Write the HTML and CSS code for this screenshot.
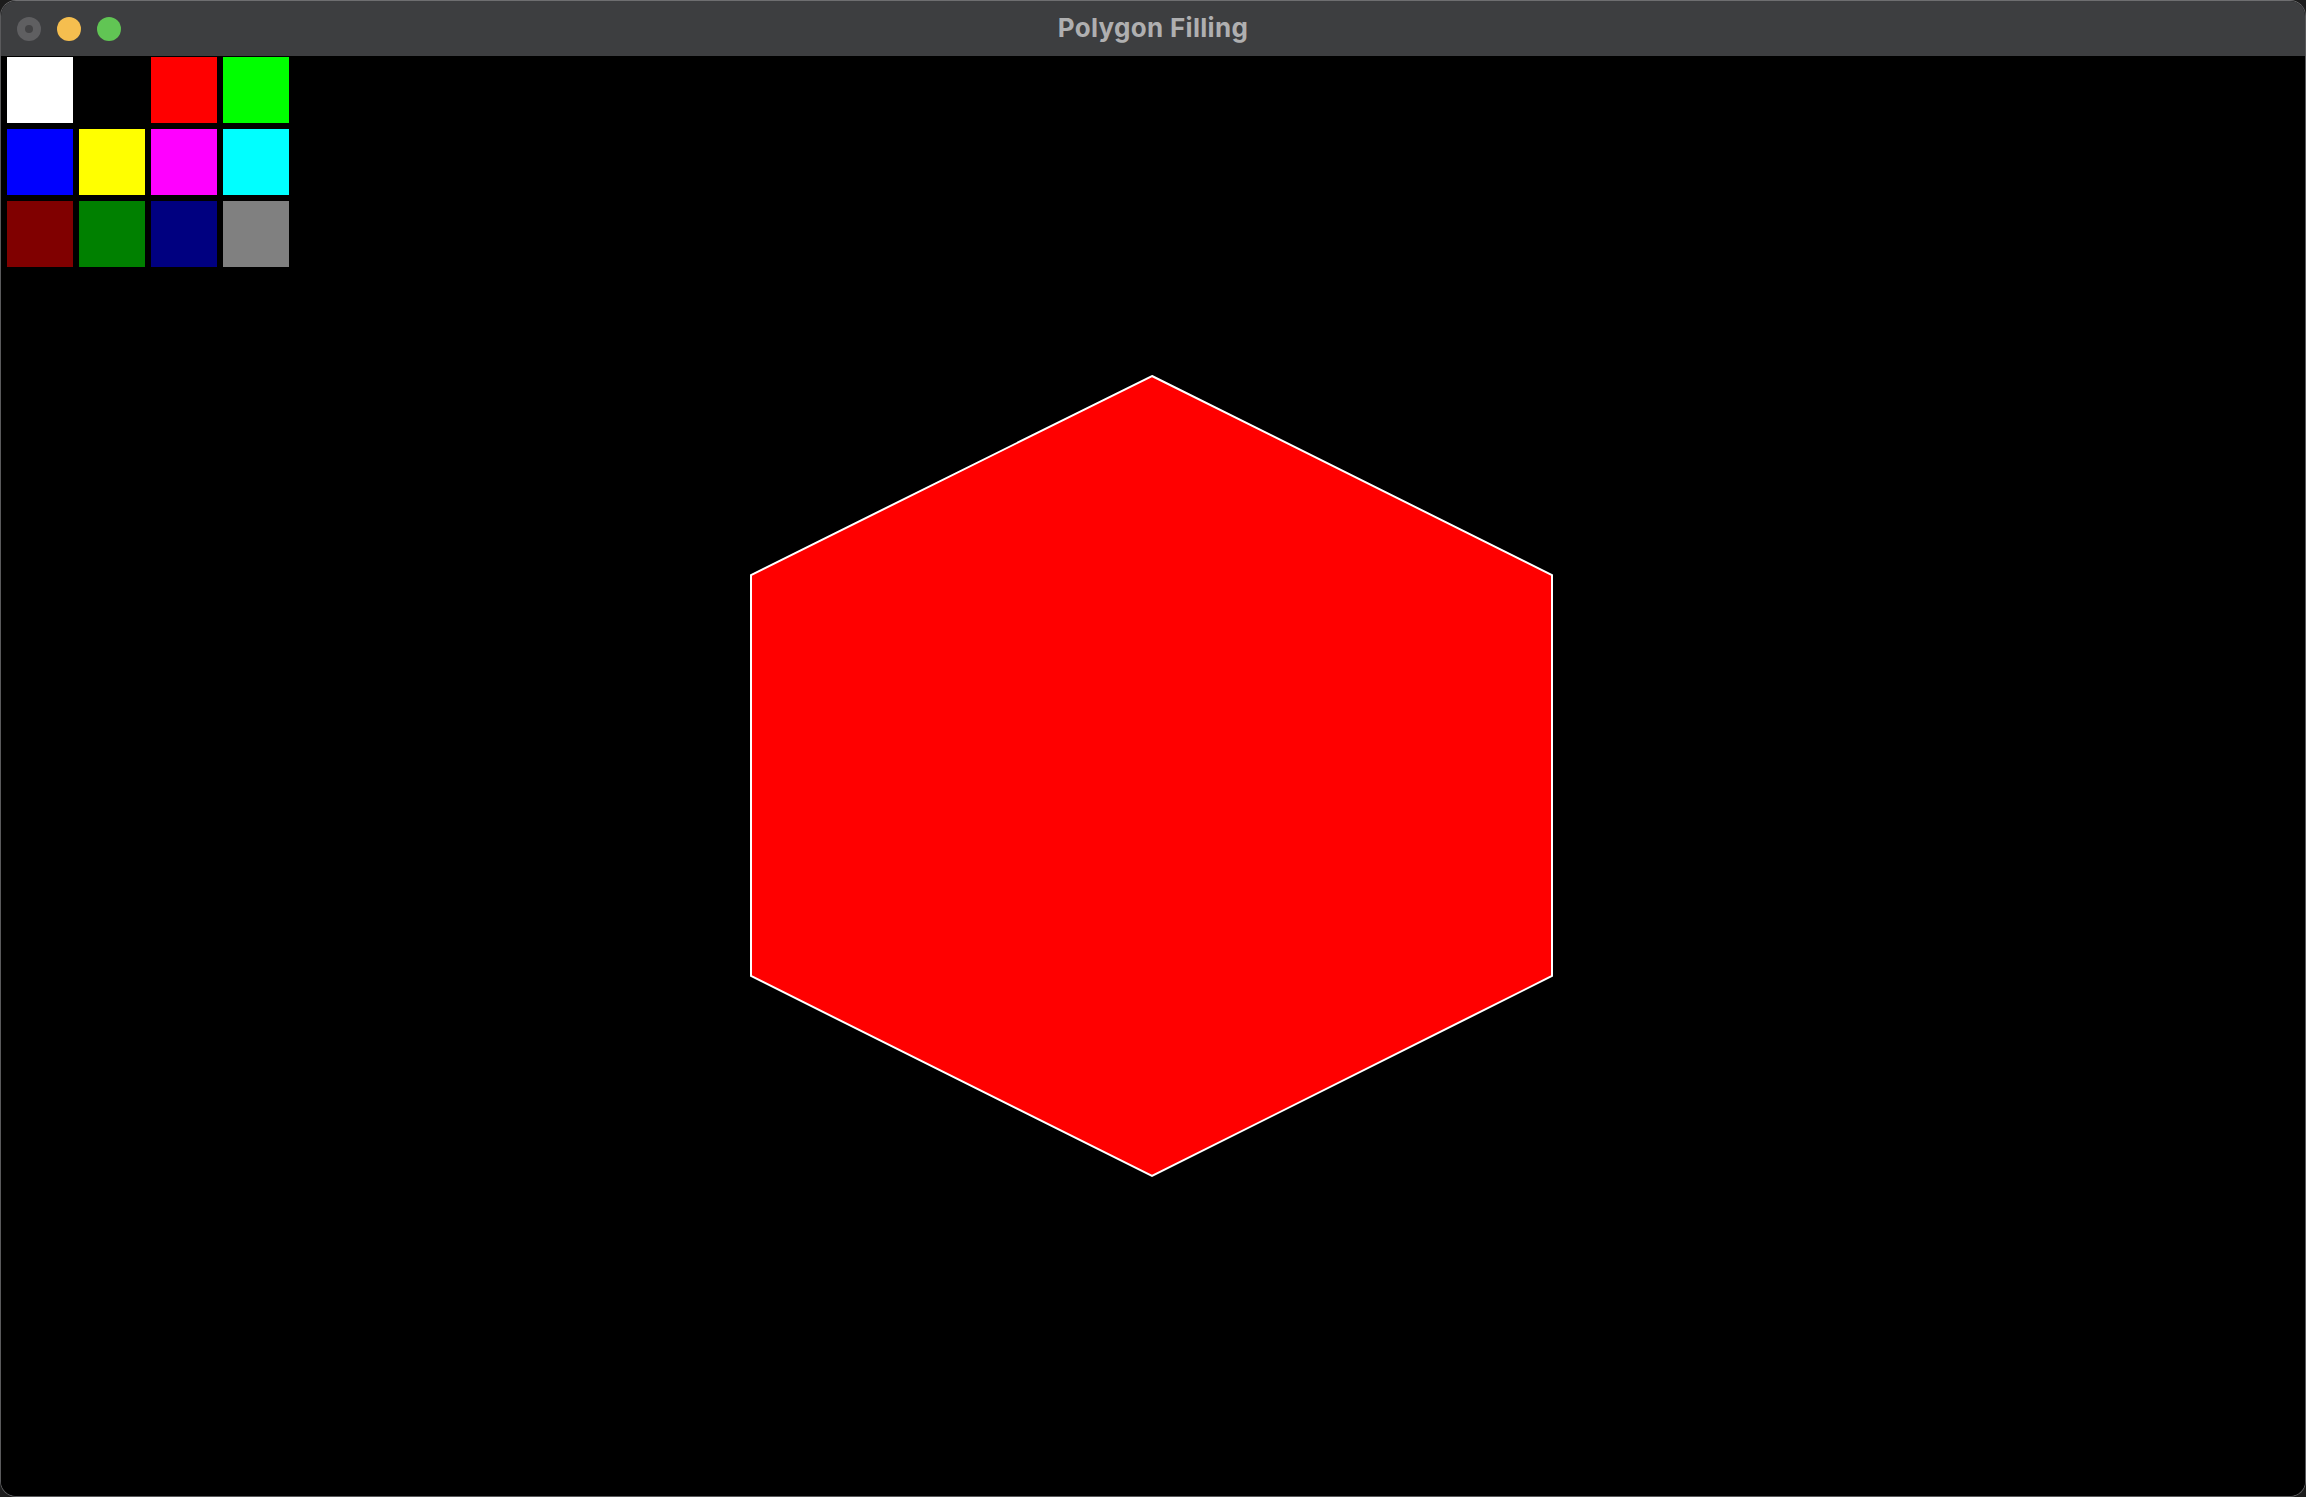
FILE: index.html
```html
<!DOCTYPE html>
<html>
<head>
<meta charset="utf-8">
<title>Polygon Filling</title>
<link rel="stylesheet" href="styles.css">
</head>
<body>
<div class="window">
  <div class="titlebar">
    <div class="lights">
      <span class="light close"><span class="dot"></span></span>
      <span class="light minimize"></span>
      <span class="light zoom"></span>
    </div>
    <div class="title">Polygon Filling</div>
    <div></div>
  </div>
  <div class="canvas">
    <div class="palette">
      <span class="swatch" style="background:#ffffff"></span>
      <span class="swatch" style="background:#000000"></span>
      <span class="swatch" style="background:#ff0000"></span>
      <span class="swatch" style="background:#00ff00"></span>
      <span class="swatch" style="background:#0000ff"></span>
      <span class="swatch" style="background:#ffff00"></span>
      <span class="swatch" style="background:#ff00ff"></span>
      <span class="swatch" style="background:#00ffff"></span>
      <span class="swatch" style="background:#800000"></span>
      <span class="swatch" style="background:#008000"></span>
      <span class="swatch" style="background:#000080"></span>
      <span class="swatch" style="background:#808080"></span>
    </div>
    <svg class="drawing" viewBox="1 56 2304 1440" width="2304" height="1440">
      <polygon points="1152,376 1552,575 1552,976 1152,1176 751,976 751,575" fill="#ff0000" stroke="#ffffff" stroke-width="2" stroke-linejoin="miter"/>
    </svg>
  </div>
</div>
</body>
</html>
```

FILE: styles.css
```css
html, body {
  margin: 0;
  padding: 0;
  width: 100%;
  height: 100%;
  background: #1c1c1c;
  overflow: hidden;
}

.window {
  box-sizing: border-box;
  width: 2306px;
  height: 1497px;
  border: 1px solid #5a5a5c;
  border-top-color: #6e6e70;
  border-radius: 16px;
  overflow: hidden;
  display: flex;
  flex-direction: column;
  background: #000;
}

.titlebar {
  flex: 0 0 55px;
  background: #3d3e40;
  display: grid;
  grid-template-columns: 1fr auto 1fr;
  align-items: center;
}

.lights {
  display: flex;
  gap: 16px;
  padding-left: 16px;
}

.light {
  width: 24px;
  height: 24px;
  border-radius: 50%;
  display: flex;
  align-items: center;
  justify-content: center;
}

.close { background: #5f5f61; }
.close .dot {
  width: 8px;
  height: 8px;
  border-radius: 50%;
  background: #434345;
}
.minimize { background: #f5be4f; }
.zoom { background: #61c554; }

.title {
  font-family: Inter, "Open Sans", "Liberation Sans", sans-serif;
  font-weight: 700;
  font-size: 26px;
  color: #afafb0;
  letter-spacing: 0.3px;
  padding-bottom: 3px;
}

.canvas {
  flex: 1;
  position: relative;
  background: #000;
}

.palette {
  position: relative;
  z-index: 1;
  display: grid;
  grid-template-columns: repeat(4, 66px);
  grid-auto-rows: 66px;
  gap: 6px;
  padding: 1px 0 0 6px;
  width: max-content;
}

.swatch {
  display: block;
}

.drawing {
  position: absolute;
  left: 0;
  top: 0;
  display: block;
}
```
